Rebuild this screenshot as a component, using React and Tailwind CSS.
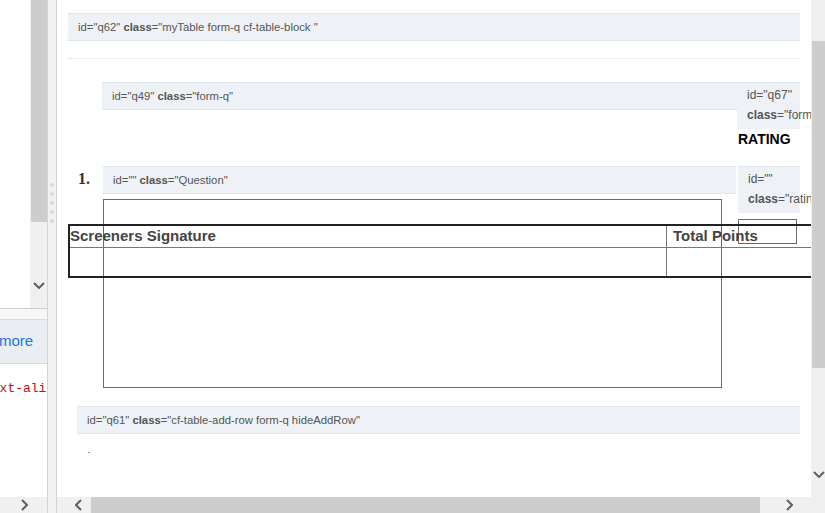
const Chevron = ({ dir = "down", className = "" }) => {
  const pts = {
    down: "1,1 6,6 11,1",
    left: "6,1 1,6 6,11",
    right: "1,1 6,6 1,11",
  }[dir];
  const size = dir === "down" ? { w: 12, h: 7 } : { w: 7, h: 12 };
  return (
    <svg width={size.w} height={size.h} viewBox={`0 0 ${size.w} ${size.h}`} className={className}>
      <polyline points={pts} fill="none" stroke="#606060" strokeWidth="2" />
    </svg>
  );
};

const Tag = ({ id, cls }) => (
  <span>
    id="{id}" <span className="font-bold">class</span>="{cls}"
  </span>
);

const Bar = ({ id, cls, className = "" }) => (
  <div
    className={`flex h-[28px] items-center border-y border-[#dde7f0] bg-[#eef2f6] pl-[10px] text-[11.3px] whitespace-nowrap text-[#555] ${className}`}
  >
    <Tag id={id} cls={cls} />
  </div>
);

export default function App() {
  return (
    <div className="flex h-[513px] w-[825px] overflow-hidden bg-white font-['Liberation_Sans',Arial,sans-serif]">
      {/* left pane */}
      <div className="flex w-[47px] shrink-0 flex-col overflow-hidden">
        <div className="flex h-[308px]">
          <div className="w-[30px] bg-white" />
          <div className="flex w-[17px] flex-col bg-[#f0f0f0]">
            <div className="ml-[1px] h-[222px] bg-[#cdcdcd]" />
            <div className="flex flex-1 items-end justify-center pb-[19px]">
              <Chevron dir="down" />
            </div>
          </div>
        </div>
        <div className="h-[11px] border-t border-[#cfcfcf] bg-[#f7f7f7]" />
        <div className="flex h-[45px] items-center border-y border-[#dcdcdc] bg-[#eaedf1] text-[15px] text-[#1a73e8]">
          <span className="-ml-[1px]">more</span>
        </div>
        <div className="flex-1 bg-white pt-[15px]">
          <div className="-ml-[16px] font-['Liberation_Mono',monospace] text-[13px] whitespace-nowrap text-[#b31412]">
            text-align: center;
          </div>
        </div>
        <div className="flex h-[16px] items-center bg-[#f0f0f0] pl-[21px]">
          <Chevron dir="right" />
        </div>
      </div>

      {/* splitter */}
      <div className="flex w-[10px] shrink-0 flex-col items-center gap-[5px] border-x border-[#d4d4d4] bg-[#f2f2f2] pt-[183px]">
        {[0, 1, 2, 3, 4].map((i) => (
          <div key={i} className="h-[4px] w-[4px] rounded-full bg-[#dadada]" />
        ))}
      </div>

      {/* right pane */}
      <div className="flex min-w-0 flex-1 flex-col">
        <div className="flex min-h-0 flex-1">
          <div className="relative min-w-0 flex-1 overflow-hidden">
            <Bar id="q62" cls="myTable form-q cf-table-block " className="mx-[11px] mt-[13px]" />
            <div className="mx-[11px] mt-[17px] border-t border-dotted border-[#dcdcdc]" />

            {/* row 1 */}
            <div className="mt-[23px] ml-[45px] mr-[11px] flex items-start">
              <Bar id="q49" cls="form-q" className="min-w-0 flex-1" />
              <div className="w-[63px] shrink-0">
                <div className="h-[47px] border-t border-[#dde7f0] bg-[#eef2f6] pt-[2px] pl-[10px] text-[12px] leading-[20px] text-[#555]">
                  <div className="whitespace-nowrap">id="q67"</div>
                  <div className="whitespace-nowrap">
                    <span className="font-bold">class</span>="form-q"
                  </div>
                </div>
                <div className="pl-[1px] pt-[1px] text-[14px] leading-[19px] font-bold text-black">RATING</div>
              </div>
            </div>

            {/* row 2 */}
            <div className="relative mt-[17px] ml-[21px] mr-[11px] flex items-start">
              <div className="w-[25px] shrink-0 pt-[2px] font-['Liberation_Serif',serif] text-[16px] leading-[22px] font-bold text-[#333]">
                1.
              </div>
              <div className="w-[633px] shrink-0">
                <Bar id="" cls="Question" />
                <div className="mt-[5px] h-[189px] w-[619px] border border-[#6a6a6a]" />
              </div>
              <div className="ml-[2px] w-[62px] shrink-0">
                <div className="h-[47px] border-t border-[#dde7f0] bg-[#eef2f6] pt-[2px] pl-[10px] text-[12px] leading-[20px] text-[#555]">
                  <div className="whitespace-nowrap">id=""</div>
                  <div className="whitespace-nowrap">
                    <span className="font-bold">class</span>="rating"
                  </div>
                </div>
                <div className="mt-[6px] h-[25px] w-[59px] border border-[#6a6a6a]" />
              </div>

              {/* table over the question box */}
              <div className="absolute top-[58px] -left-[10px] w-[800px] border-y-2 border-l-2 border-[#222] text-[15px] font-bold text-[#444]">
                <div className="flex h-[21px] items-center">
                  <div className="w-[596px] shrink-0">Screeners Signature</div>
                  <div className="flex h-full flex-1 items-center border-l border-[#777] pl-[6px]">Total Points</div>
                </div>
                <div className="flex h-[29px] border-t border-[#777]">
                  <div className="w-[596px] shrink-0" />
                  <div className="flex-1 border-l border-[#777]" />
                </div>
              </div>
            </div>

            <Bar id="q61" cls="cf-table-add-row form-q hideAddRow" className="mt-[18px] ml-[20px] mr-[11px]" />
            <div className="mt-[18px] ml-[31px] h-[1px] w-[2px] bg-[#8a9bd0]" />
          </div>

          {/* vertical scrollbar */}
          <div className="flex w-[14px] shrink-0 flex-col overflow-hidden bg-[#f0f0f0]">
            <div className="mt-[41px] ml-[1px] h-[327px] w-[17px] bg-[#cdcdcd]" />
            <div className="flex flex-1 items-end pb-[19px] pl-[2px]">
              <Chevron dir="down" />
            </div>
          </div>
        </div>

        {/* horizontal scrollbar */}
        <div className="flex h-[16px] shrink-0 items-center bg-[#f0f0f0]">
          <div className="flex w-[34px] shrink-0 justify-center pl-[8px]">
            <Chevron dir="left" />
          </div>
          <div className="h-full w-[669px] bg-[#cdcdcd]" />
          <div className="flex flex-1 items-center pl-[26px]">
            <Chevron dir="right" />
          </div>
        </div>
      </div>
    </div>
  );
}
